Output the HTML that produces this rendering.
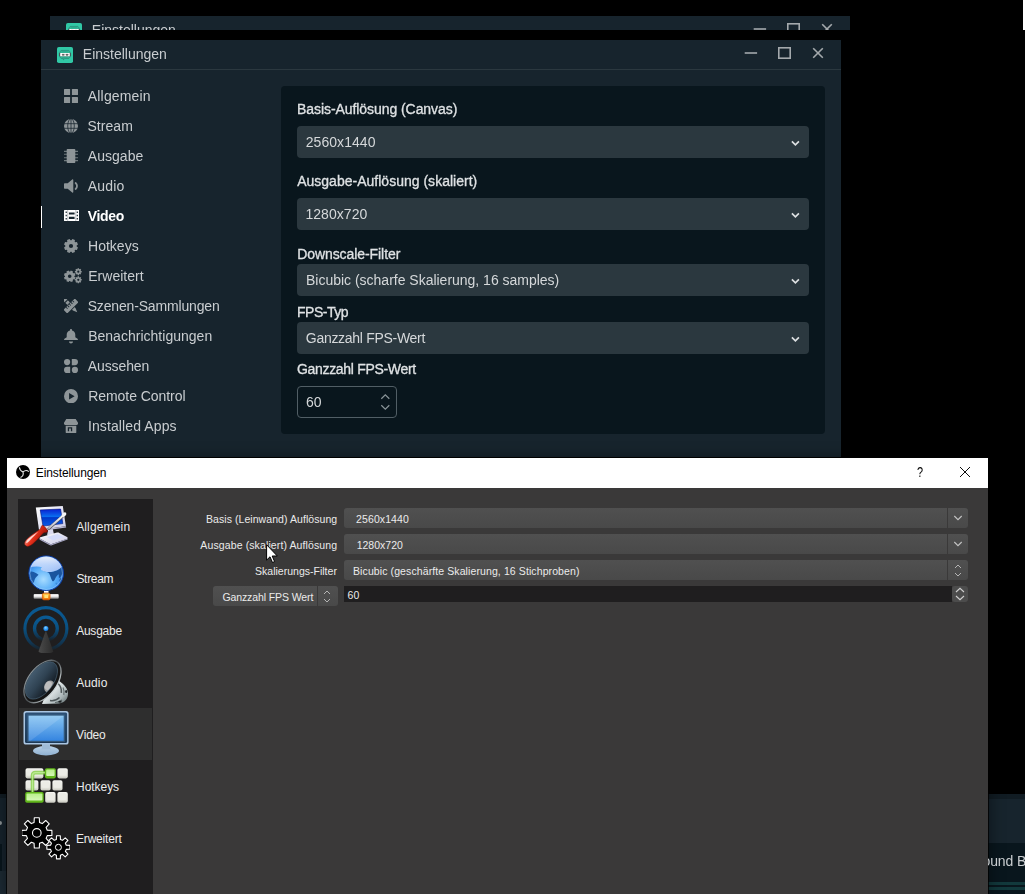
<!DOCTYPE html>
<html lang="de">
<head>
<meta charset="utf-8">
<title>Einstellungen</title>
<style>
html,body{margin:0;padding:0;}
body{width:1025px;height:894px;background:#000;overflow:hidden;position:relative;font-family:"Liberation Sans",sans-serif;}
.a{position:absolute;}
.gl{position:absolute;left:0;top:0;width:1025px;height:894px;will-change:transform;}
.tx{position:absolute;white-space:nowrap;line-height:20px;font-family:"Liberation Sans",sans-serif;}
.slwin{position:absolute;width:800px;background:#17242d;overflow:hidden;}
.sltb{position:absolute;left:0;top:0;width:800px;height:29px;border-bottom:1px solid #2b383f;}
.slicon{position:absolute;left:16px;top:7px;width:16px;height:16px;}
.ctl{position:absolute;}
.panel{position:absolute;left:281px;top:86px;width:544px;height:348px;background:#09161d;border-radius:4px;}
.inp{position:absolute;left:297px;width:512px;height:32px;background:#2b383f;border-radius:4px;}
.chev{position:absolute;left:791px;width:9px;height:7px;}
.num{position:absolute;left:297px;top:386px;width:98px;height:30px;border:1px solid #515e65;border-radius:4px;background:#09161d;}
.navic{position:absolute;left:63px;width:16px;height:16px;}
.obs{position:absolute;left:7px;top:458px;width:981px;height:436px;background:#3a3939;box-shadow:0 0 0 1px rgba(0,0,0,.75),0 2px 14px 2px rgba(0,0,0,.42);}
.obstb{position:absolute;left:0;top:0;width:981px;height:30px;background:#fff;}
.olist{position:absolute;left:11px;top:41px;width:135px;height:400px;background:#1f1e1f;}
.osel{position:absolute;left:12px;top:250px;width:133px;height:52px;background:#2e2e2e;}
.ocombo{position:absolute;left:337px;width:624px;height:20px;background:linear-gradient(#505050,#494949);border-radius:3px;}
.ocombo i{position:absolute;right:20px;top:0;width:1px;height:20px;background:#3a3939;}
.oico{position:absolute;left:15px;width:48px;height:48px;}
</style>
</head>
<body>
<!-- white sliver top right -->
<div class="a" style="left:1023px;top:0;width:2px;height:30px;background:#fff"></div>

<!-- background app bits (bottom) -->
<div class="a" style="left:0;top:794px;width:8px;height:100px;background:#17242d"></div>
<div class="a" style="left:0;top:794px;width:8px;height:4px;background:#111c23"></div>
<div class="a" style="left:0;top:844px;width:2px;height:27px;background:#09161d"></div>
<div class="a" style="left:0;top:871px;width:8px;height:23px;background:#1d2b35"></div>
<div class="a" style="left:0;top:821px;width:2px;height:4px;background:#8e9598;border-radius:0 2px 2px 0"></div>
<div class="a" style="left:988px;top:794px;width:37px;height:100px;background:#17242d"></div>
<div class="a" style="left:988px;top:794px;width:37px;height:5px;background:#111c23"></div>
<div class="a" style="left:988px;top:843px;width:37px;height:51px;background:#09161d"></div>
<div class="a" style="left:988px;top:882px;width:37px;height:3px;background:#12393c"></div>
<div class="a" style="left:988px;top:887px;width:37px;height:3px;background:#12393c"></div>

<!-- partially visible Streamlabs window (strip) -->
<div class="slwin" style="left:50px;top:16px;height:14px;">
<div class="sltb"></div>
<svg class="slicon" viewBox="0 0 16 16"><rect width="16" height="16" rx="1.800" fill="#31c8a6"/><path d="M4.600 3.400h6.800c.5 0 .9.300 1.100.7l1.100 2v3l-1.100 1.700c-.2.400-.6.700-1.100.7H7.800l-1.500 1.400v-1.400H4.600c-.5 0-.9-.3-1.100-.7L2.400 9.100v-3l1.100-2c.2-.4.600-.7 1.100-.7z" fill="#2db595" stroke="#2b6f66" stroke-width=".5"/><path d="M5.200 4.400h5.600M5.200 10.400h5.400" stroke="#2a9a80" stroke-width=".5"/><rect x="2.200" y="5.900" width="11.600" height="3.300" rx=".6" fill="#4b4852"/><rect x="3.200" y="5.900" width="9.600" height="3.300" rx=".5" fill="#fff"/><path d="M5 7h2.200v1.500H5.300zM9 7h2.300l-.3 1.500H9zM7.200 7.300h1.800" fill="#666" stroke="#666" stroke-width=".3"/></svg>
<svg class="ctl" style="left:703px;top:6px;width:90px;height:14px" viewBox="0 0 90 14"><g fill="none" stroke="#a4a9ac" stroke-width="1.600"><path d="M0.700 7h12.400"/><rect x="34.800" y="1.800" width="11.400" height="10.400"/><path d="M69.200 2.200l9.600 9.600M78.800 2.200l-9.600 9.600"/></g></svg>

</div>

<!-- main Streamlabs settings window -->
<div class="slwin" style="left:41px;top:40px;height:417px;">
<div class="sltb"></div>
<svg class="slicon" viewBox="0 0 16 16"><rect width="16" height="16" rx="1.800" fill="#31c8a6"/><path d="M4.600 3.400h6.800c.5 0 .9.300 1.100.7l1.100 2v3l-1.100 1.700c-.2.400-.6.700-1.100.7H7.800l-1.500 1.400v-1.400H4.600c-.5 0-.9-.3-1.100-.7L2.400 9.100v-3l1.100-2c.2-.4.600-.7 1.100-.7z" fill="#2db595" stroke="#2b6f66" stroke-width=".5"/><path d="M5.200 4.400h5.600M5.200 10.400h5.400" stroke="#2a9a80" stroke-width=".5"/><rect x="2.200" y="5.900" width="11.600" height="3.300" rx=".6" fill="#4b4852"/><rect x="3.200" y="5.900" width="9.600" height="3.300" rx=".5" fill="#fff"/><path d="M5 7h2.200v1.500H5.300zM9 7h2.300l-.3 1.500H9zM7.200 7.300h1.800" fill="#666" stroke="#666" stroke-width=".3"/></svg>
<svg class="ctl" style="left:703px;top:6px;width:90px;height:14px" viewBox="0 0 90 14"><g fill="none" stroke="#a4a9ac" stroke-width="1.600"><path d="M0.700 7h12.400"/><rect x="34.800" y="1.800" width="11.400" height="10.400"/><path d="M69.200 2.200l9.600 9.600M78.800 2.200l-9.600 9.600"/></g></svg>

</div>
<div class="a" style="left:41px;top:206px;width:1px;height:22px;background:#fff"></div>
<div class="panel"></div>
<div class="inp" style="top:126px"></div>
<div class="inp" style="top:198px"></div>
<div class="inp" style="top:264px"></div>
<div class="inp" style="top:322px"></div>
<svg class="chev" style="top:140px" viewBox="0 0 9 7"><path d="M.9 1.400L4.400 4.900 7.900 1.400" fill="none" stroke="#dde0e2" stroke-width="1.700"/></svg>
<svg class="chev" style="top:212px" viewBox="0 0 9 7"><path d="M.9 1.400L4.400 4.900 7.900 1.400" fill="none" stroke="#dde0e2" stroke-width="1.700"/></svg>
<svg class="chev" style="top:278px" viewBox="0 0 9 7"><path d="M.9 1.400L4.400 4.900 7.900 1.400" fill="none" stroke="#dde0e2" stroke-width="1.700"/></svg>
<svg class="chev" style="top:336px" viewBox="0 0 9 7"><path d="M.9 1.400L4.400 4.900 7.900 1.400" fill="none" stroke="#dde0e2" stroke-width="1.700"/></svg>

<div class="num"></div>
<svg class="a" style="left:380px;top:393px;width:10px;height:18px" viewBox="0 0 10 18"><path d="M1.300 5.700L5.300 1.800 9.300 5.700M1.300 12.300l4 3.900 4-3.900" fill="none" stroke="#8a9599" stroke-width="1.200"/></svg>
<svg class="a" style="left:64px;top:89px;width:14px;height:14px" viewBox="0 0 14 14"><g fill="#8e9598"><rect x="0" y="0" width="6.100" height="6.100" rx=".5"/><rect x="0" y="7.9" width="6.100" height="6.100" rx=".5"/><rect x="7.9" y="0" width="6.100" height="6.100" rx=".5"/><rect x="7.9" y="7.9" width="6.100" height="6.100" rx=".5"/></g></svg>
<svg class="a" style="left:64px;top:118.5px;width:14px;height:14px" viewBox="0 0 14 14"><circle cx="7" cy="7" r="7" fill="#8e9598"/><g fill="none" stroke="#17242d" stroke-width=".75"><ellipse cx="7" cy="7" rx="3.300" ry="7.300"/><path d="M7 0v14M0 4.700h14M0 9.300h14"/></g></svg>
<svg class="a" style="left:64px;top:149px;width:14px;height:14px" viewBox="0 0 14 14"><path fill="#8e9598" d="M3.700 0h6.600c.6 0 1 .4 1 1v12c0 .6-.4 1-1 1H3.700c-.6 0-1-.4-1-1V1c0-.6.4-1 1-1z"/><path fill="#8e9598" opacity=".75" d="M0 1.8h3v1.100H0zM11 1.8h3v1.100h-3zM0 4.7h3v1.100H0zM11 4.7h3v1.100h-3zM0 8.2h3v1.100H0zM11 8.2h3v1.100h-3zM0 11.1h3v1.100H0zM11 11.1h3v1.100h-3z"/></svg>
<svg class="a" style="left:64px;top:178.5px;width:14px;height:14px" viewBox="0 0 14 14"><path fill="#8e9598" d="M.7 4.200h3L8.200.4c.4-.4 1.100-.1 1.100.5v12.200c0 .6-.7.900-1.100.5L3.700 9.800H.7c-.4 0-.7-.3-.7-.7V4.900c0-.4.300-.7.700-.7z"/><path fill="none" stroke="#8e9598" stroke-width="1.800" stroke-linecap="round" d="M11.600 4a3.900 3.900 0 0 1 0 6"/></svg>
<svg class="a" style="left:63.5px;top:210px;width:15.5px;height:11.2px" viewBox="0 0 15.5 11.2"><path fill="#ffffff" fill-rule="evenodd" d="M.6 0h14.300c.3 0 .6.300.6.600v10c0 .3-.3.600-.6.600H.6c-.3 0-.6-.3-.6-.6V.6C0 .3.300 0 .6 0zM1.600 1.5h1.200v1.400H1.600zM12.700 1.5h1.200v1.400h-1.200zM1.600 4.8h1.200v1.400H1.600zM12.700 4.8h1.200v1.400h-1.200zM1.600 8.1h1.200v1.400H1.600zM12.700 8.1h1.200v1.400h-1.200zM4.900 2.400h5.700v2.100H4.900zM4.900 6.800h5.700v2.100H4.900z"/><path d="M3.700 0v11.200M11.800 0v11.200" stroke="#17242d" stroke-width=".5" opacity=".55"/></svg>
<svg class="a" style="left:64px;top:239px;width:14px;height:14px" viewBox="0 0 14 14"><path fill="#8e9598" fill-rule="evenodd" d="M12.68 7.50L13.96 8.40L12.91 10.94L11.37 10.66L10.66 11.37L10.94 12.91L8.40 13.96L7.50 12.68L6.50 12.68L5.60 13.96L3.06 12.91L3.34 11.37L2.63 10.66L1.09 10.94L0.04 8.40L1.32 7.50L1.32 6.50L0.04 5.60L1.09 3.06L2.63 3.34L3.34 2.63L3.06 1.09L5.60 0.04L6.50 1.32L7.50 1.32L8.40 0.04L10.94 1.09L10.66 2.63L11.37 3.34L12.91 3.06L13.96 5.60L12.68 6.50zM4.90 7.00a2.1 2.1 0 1 0 4.2 0a2.1 2.1 0 1 0 -4.2 0z"/></svg>
<svg class="a" style="left:64px;top:268px;width:18px;height:15.5px" viewBox="0 0 18 15.5"><path fill="#8e9598" fill-rule="evenodd" d="M10.38 8.71L11.48 9.46L10.61 11.57L9.30 11.32L8.72 11.90L8.97 13.21L6.86 14.08L6.11 12.98L5.29 12.98L4.54 14.08L2.43 13.21L2.68 11.90L2.10 11.32L0.79 11.57L-0.08 9.46L1.02 8.71L1.02 7.89L-0.08 7.14L0.79 5.03L2.10 5.28L2.68 4.70L2.43 3.39L4.54 2.52L5.29 3.62L6.11 3.62L6.86 2.52L8.97 3.39L8.72 4.70L9.30 5.28L10.61 5.03L11.48 7.14L10.38 7.89zM3.90 8.30a1.8 1.8 0 1 0 3.6 0a1.8 1.8 0 1 0 -3.6 0z"/><path fill="#8e9598" fill-rule="evenodd" d="M16.88 2.89L17.73 3.02L17.73 4.38L16.88 4.51L16.69 4.95L17.21 5.65L16.25 6.61L15.55 6.09L15.11 6.28L14.98 7.13L13.62 7.13L13.49 6.28L13.05 6.09L12.35 6.61L11.39 5.65L11.91 4.95L11.72 4.51L10.87 4.38L10.87 3.02L11.72 2.89L11.91 2.45L11.39 1.75L12.35 0.79L13.05 1.31L13.49 1.12L13.62 0.27L14.98 0.27L15.11 1.12L15.55 1.31L16.25 0.79L17.21 1.75L16.69 2.45zM13.20 3.70a1.1 1.1 0 1 0 2.2 0a1.1 1.1 0 1 0 -2.2 0zM16.88 10.99L17.73 11.12L17.73 12.48L16.88 12.61L16.69 13.05L17.21 13.75L16.25 14.71L15.55 14.19L15.11 14.38L14.98 15.23L13.62 15.23L13.49 14.38L13.05 14.19L12.35 14.71L11.39 13.75L11.91 13.05L11.72 12.61L10.87 12.48L10.87 11.12L11.72 10.99L11.91 10.55L11.39 9.85L12.35 8.89L13.05 9.41L13.49 9.22L13.62 8.37L14.98 8.37L15.11 9.22L15.55 9.41L16.25 8.89L17.21 9.85L16.69 10.55zM13.20 11.80a1.1 1.1 0 1 0 2.2 0a1.1 1.1 0 1 0 -2.2 0z"/></svg>
<svg class="a" style="left:64px;top:298.5px;width:14px;height:14px" viewBox="0 0 14 14"><g transform="rotate(45 7 7)"><path fill="#8e9598" d="M-2.100 5.200h13.600l4.400 1.800-4.400 1.800H-2.100c-.4 0-.7-.3-.7-.7V5.900c0-.4.300-.7.700-.7z"/><rect x="-.2" y="5" width="1" height="4" fill="#17242d"/></g><g transform="rotate(-45 7 7)"><rect x="-1.600" y="3.600" width="17.200" height="6.800" rx=".8" fill="#17242d"/><rect x="-1" y="4.400" width="16" height="5.200" rx=".6" fill="#8e9598"/><rect x="2.2" y="4.400" width=".9" height="2.100" fill="#17242d"/><rect x="4.5" y="4.400" width=".9" height="2.100" fill="#17242d"/><rect x="6.8" y="4.400" width=".9" height="2.100" fill="#17242d"/><rect x="9.1" y="4.400" width=".9" height="2.100" fill="#17242d"/><rect x="11.4" y="4.400" width=".9" height="2.100" fill="#17242d"/></g></svg>
<svg class="a" style="left:64px;top:328.5px;width:14px;height:15px" viewBox="0 0 14 15"><path fill="#8e9598" d="M7 0c.6 0 1 .4 1 1v.4c2 .5 3.300 2.200 3.300 4.300v2.500l1.900 1.300c.5.300.800.700.800 1.100 0 .3-.2.500-.5.500H.5c-.3 0-.5-.2-.5-.5 0-.4.300-.8.800-1.100l1.900-1.300V5.700c0-2.100 1.300-3.800 3.300-4.300V1c0-.6.400-1 1-1zM5 12.500h4c0 1.100-.9 2-2 2s-2-.9-2-2z"/></svg>
<svg class="a" style="left:64px;top:359px;width:14px;height:14px" viewBox="0 0 14 14"><circle cx="3.100" cy="3.100" r="3.100" fill="#8e9598"/><circle cx="10.900" cy="10.900" r="3.100" fill="#8e9598"/><path fill="#8e9598" d="M7.800 0h3.100a3.100 3.100 0 0 1 0 6.200H7.800zM6.200 7.800H3.100a3.100 3.100 0 0 0 0 6.200h3.100z"/></svg>
<svg class="a" style="left:64px;top:388.5px;width:14px;height:14.4px" viewBox="0 0 14 14.4"><path fill="#8e9598" fill-rule="evenodd" d="M0 7.200a7 7.200 0 1 0 14 0a7 7.200 0 1 0 -14 0zM5.100 3.900L10.600 7.200 5.100 10.500z"/></svg>
<svg class="a" style="left:64px;top:419px;width:14px;height:14px" viewBox="0 0 14 14"><path fill="#8e9598" d="M2.300 0h9.400L14 3.700v1c0 .7-.6 1.200-1.300 1.200H1.300C.6 5.900 0 5.400 0 4.700v-1z"/><path fill="#8e9598" fill-rule="evenodd" d="M1.700 6.800h10.600V13.600c0 .2-.2.400-.4.400H2.100c-.2 0-.4-.2-.4-.4zM3.800 8.300v3.900h4.400V8.300zM5.100 9.600h1.800v2.600H5.100z"/></svg>


<!-- OBS settings window -->
<div class="obs">
<div class="obstb"></div>
<div class="olist"></div>
<div class="osel"></div>
<div class="ocombo" style="top:50px"><i></i></div>
<div class="ocombo" style="top:76px"><i></i></div>
<div class="ocombo" style="top:102px"><i></i></div>
<div class="ocombo" style="left:206px;top:128px;width:125px"><i></i></div>
<div class="a" style="left:337px;top:128px;width:608px;height:16px;background:#1f1e1f"></div>
<div class="a" style="left:945px;top:128px;width:16px;height:16px;background:#4c4c4c;border-radius:3px"></div>
<svg class="a" style="left:9px;top:7px;width:14px;height:14px" viewBox="0 0 14 14"><circle cx="7" cy="7" r="7" fill="#000"/><path d="M7 7C5.500 6.300 3.600 5.200 3.400 2.200M7 7C8.300 5.800 10.500 4.600 12.800 6.600M7 7C7.600 9 7.200 11.200 4.500 12.600" fill="none" stroke="#fff" stroke-width="1.100" opacity=".92"/></svg>
<svg class="a" style="left:952px;top:8px;width:12px;height:12px" viewBox="0 0 12 12"><path d="M1 1l10 10M11 1L1 11" stroke="#000" stroke-width=".95"/></svg>
<svg class="a" style="left:946px;top:57px;width:10px;height:6px" viewBox="0 0 10 6"><path d="M1.300 1l3.700 3.700L8.700 1" fill="none" stroke="#c4c4c4" stroke-width="1.100"/></svg>
<svg class="a" style="left:946px;top:83px;width:10px;height:6px" viewBox="0 0 10 6"><path d="M1.300 1l3.700 3.700L8.700 1" fill="none" stroke="#c4c4c4" stroke-width="1.100"/></svg>
<svg class="a" style="left:947px;top:106px;width:8px;height:13px" viewBox="0 0 8 13"><path d="M1 4l3-3 3 3M1 9l3 3 3-3" fill="none" stroke="#b4b4b4" stroke-width="1"/></svg>
<svg class="a" style="left:316px;top:132px;width:8px;height:13px" viewBox="0 0 8 13"><path d="M1 4l3-3 3 3M1 9l3 3 3-3" fill="none" stroke="#b4b4b4" stroke-width="1"/></svg>
<svg class="a" style="left:948px;top:129px;width:10px;height:14px" viewBox="0 0 10 14"><path d="M1 5l4-3.700L9 5M1 9l4 3.700L9 9" fill="none" stroke="#d0d0d0" stroke-width="1.100"/></svg>
<svg class="oico" style="top:43px" viewBox="0 0 48 48"><defs><linearGradient id="g1a" x1="0" y1="0" x2="0" y2="1"><stop offset="0" stop-color="#0a1fd0"/><stop offset=".45" stop-color="#0a6ff0"/><stop offset=".5" stop-color="#0037c8"/><stop offset="1" stop-color="#0a5be6"/></linearGradient>
<linearGradient id="g1b" x1="0" y1="0" x2="1" y2="1"><stop offset="0" stop-color="#ffffff"/><stop offset="1" stop-color="#c9c9e6"/></linearGradient>
<linearGradient id="g1c" x1="0" y1="0" x2="1" y2="1"><stop offset="0" stop-color="#ffa596"/><stop offset=".4" stop-color="#e8321c"/><stop offset="1" stop-color="#9c1408"/></linearGradient>
<linearGradient id="g1d" x1="0" y1="0" x2="0" y2="1"><stop offset="0" stop-color="#ffffff"/><stop offset="1" stop-color="#b9b9c9"/></linearGradient></defs><path d="M26.5 26.500l4 0 1.500 7-7 1z" fill="#d9d9ee"/>
<path d="M18.300 36.300L35 31.600c.8-.2 1.600-.1 2.300.3l7.700 4.200c1 .6.900 1.600-.2 2L29.800 43c-.8.300-1.700.2-2.400-.2l-9.300-5c-.8-.5-.7-1.200.2-1.500z" fill="url(#g1b)"/>
<path d="M17.600 37.300l9.800 5.500c.7.400 1.600.5 2.400.2l15.900-5.600c.2.600-.1 1.100-.9 1.400L29.800 44.300c-.8.300-1.700.2-2.400-.2l-9.300-5.200c-.6-.4-.8-1-.5-1.600z" fill="#a9a9c6"/>
<path d="M25 36l10.500-2.900 6 3.100-10.500 3.400z" fill="#d3dbfb"/>
<g transform="translate(0 .6)"><path d="M13.800 5.800L40.800 4.500 43.900 24.600 17 28.300z" fill="url(#g1b)"/>
<path d="M17 28.300L43.900 24.600l.3 1.200L17.400 29.700z" fill="#b5b5d2"/>
<path d="M18.200 8.300L38.600 7.500 40.800 22 21 24.500z" fill="url(#g1a)"/>
<path d="M18.200 8.300L38.600 7.500 40.800 22 21 24.500z" fill="none" stroke="#00107a" stroke-width=".6"/></g>
<path d="M27 27.300L42.600 13.500" stroke="#555" stroke-width="2.900" stroke-linecap="round"/>
<path d="M27 27L42.600 13.300" stroke="url(#g1d)" stroke-width="2" stroke-linecap="round"/>
<ellipse cx="42" cy="13.600" rx="2.700" ry="1.700" transform="rotate(-40 42 13.600)" fill="#f6f6f6"/>
<g transform="translate(-.3 -.6) rotate(-41 14 36) translate(14 36) scale(.88) translate(-14 -36)"><path d="M-1.500 36c0-2.800 3-4.300 7.500-4.300 6 0 12.500 1.200 17.500 1.500 1.500-.8 2.800-1.900 4-1.900 1 0 1.400 2.200 1.400 4.700s-.4 4.700-1.400 4.700c-1.200 0-2.500-1.100-4-1.900-5 .3-11.500 1.500-17.500 1.500-4.500 0-7.500-1.500-7.500-4.300z" fill="url(#g1c)" stroke="#7a0c04" stroke-width=".5"/><path d="M1 34.500c1-1.300 3-1.800 6-1.800 4 0 9 .6 13 1-4 .4-9 .8-13 1.200-2.500.2-5 .6-6-.4z" fill="#ffe4de" opacity=".95"/></g></svg>
<svg class="oico" style="top:95px" viewBox="0 0 48 48"><defs><radialGradient id="g2a" cx=".42" cy=".68" r=".75"><stop offset="0" stop-color="#a8dcff"/><stop offset=".45" stop-color="#58aef8"/><stop offset=".8" stop-color="#2c7be0"/><stop offset="1" stop-color="#0f47b4"/></radialGradient>
<linearGradient id="g2b" x1="0" y1="0" x2="0" y2="1"><stop offset="0" stop-color="#ffffff" stop-opacity=".95"/><stop offset=".6" stop-color="#dfe6ff" stop-opacity=".75"/><stop offset="1" stop-color="#c6cff8" stop-opacity=".7"/></linearGradient>
<linearGradient id="g2c" x1="0" y1="0" x2="0" y2="1"><stop offset="0" stop-color="#dcdcdc"/><stop offset=".4" stop-color="#ffffff"/><stop offset="1" stop-color="#7c7c7c"/></linearGradient>
<linearGradient id="g2d" x1="0" y1="0" x2="0" y2="1"><stop offset="0" stop-color="#ffd24a"/><stop offset="1" stop-color="#f06a00"/></linearGradient>
<clipPath id="c2"><circle cx="24.200" cy="20.200" r="16.800"/></clipPath></defs><rect x="22" y="36.500" width="4.500" height="5" fill="url(#g2c)"/>
<rect x="11.700" y="41.100" width="25" height="4.700" rx=".8" fill="url(#g2c)"/>
<rect x="20.400" y="40.200" width="7.600" height="6.600" rx="1.500" fill="url(#g2d)" stroke="#e05a00" stroke-width=".8"/>
<rect x="22.300" y="41.800" width="3.800" height="3.200" fill="#ffe27a"/>
<circle cx="24.200" cy="20.200" r="17.300" fill="url(#g2a)" stroke="#0d3fa8" stroke-width="1"/>
<g clip-path="url(#c2)"><path d="M8.500 18.500c2.500-.3 5.500 1.200 8 3.200-1.200 1.300-2.800 2.500-3.600 4.300-.7 1.600-1 4.200-2 5-1.300-1-1.300-3.500-2.200-5.300-.9-1.700-1.500-4-.2-7.200z" fill="#1c5aa6"/>
<path d="M19.500 17.200c2.500 1.600 6 2 9.500 1.700 4-.4 8.500-2 11.500-5.600.8 1.800 1.600 4.500 1.400 6.500-1 1-2 1.600-2.600 3-.5 1.200-1.400 2.300-2.300 2.300-.4-1.600.3-3-.5-3.800-1.500 1-2.800 3.200-3.800 5.500-.6 1.300-1.800 2.200-2.500 1-1.200-2.300-1.800-5-3-7.300-1.300-2.300-6-1.800-7.700-3.300z" fill="#1a549e"/>
<path d="M38.800 24.500c.8.700 1.500 1.800 1.100 3-.4 1.100-1.300 2-2.100 1.600-.7-.7-.4-2.100.1-3zM34 29.500c.5.500.6 1.300.2 2-.3-.2-.6-1.200-.2-2z" fill="#1f60ac"/>
<path d="M4.500 16C5 6.500 15 1.500 25 2.500c7.500.8 13.500 5 15.500 10.800-3 3.600-7.500 5.200-11.500 5.600-3.500.3-7-.1-9.500-1.700-1.300-1-.6-2.400.8-3C15 13 9 13.500 4.500 16z" fill="url(#g2b)"/></g>
<circle cx="24.200" cy="20.200" r="16.300" fill="none" stroke="#bfe0ff" stroke-width=".6" opacity=".6"/></svg>
<svg class="oico" style="top:147px" viewBox="0 0 48 48"><defs><linearGradient id="g3a" x1="0" y1="0" x2="0" y2="1"><stop offset="0" stop-color="#0a5a94"/><stop offset=".5" stop-color="#0a5080"/><stop offset=".85" stop-color="#0d3a5c" stop-opacity=".8"/><stop offset="1" stop-color="#0d3048" stop-opacity=".35"/></linearGradient>
<linearGradient id="g3b" x1="0" y1="0" x2="1" y2="0"><stop offset="0" stop-color="#4a4a4a"/><stop offset="1" stop-color="#2b2b2b"/></linearGradient>
<radialGradient id="g3c" cx=".45" cy=".35" r=".7"><stop offset="0" stop-color="#8fd2ff"/><stop offset=".5" stop-color="#2f9bf5"/><stop offset="1" stop-color="#0a6fd8"/></radialGradient></defs><circle cx="23.900" cy="23.600" r="21" fill="none" stroke="url(#g3a)" stroke-width="3.100"/>
<circle cx="23.900" cy="23.600" r="11.400" fill="none" stroke="url(#g3a)" stroke-width="3.300"/>
<path d="M23.900 25.200L31.300 46.500c-2 2.600-12.800 2.600-14.800 0z" fill="url(#g3b)"/>
<circle cx="23.900" cy="23.500" r="2.500" fill="url(#g3c)"/></svg>
<svg class="oico" style="top:199px" viewBox="0 0 48 48"><defs><linearGradient id="g4a" x1="0" y1="0" x2="0" y2="1"><stop offset="0" stop-color="#445b6e"/><stop offset=".5" stop-color="#2f4252"/><stop offset="1" stop-color="#141c24"/></linearGradient>
<linearGradient id="g4b" x1="0" y1="0" x2="1" y2="1"><stop offset="0" stop-color="#8d999c"/><stop offset=".45" stop-color="#e4eaeb"/><stop offset=".75" stop-color="#aab5b7"/><stop offset="1" stop-color="#4e5a5c"/></linearGradient>
<linearGradient id="g4c" x1="0" y1="0" x2="0" y2="1"><stop offset="0" stop-color="#8a9398"/><stop offset=".5" stop-color="#4a4f52"/><stop offset="1" stop-color="#c8d0d2"/></linearGradient>
<clipPath id="c4"><ellipse cx="19.400" cy="23.400" rx="21.600" ry="11.900" transform="rotate(-53 19.400 23.400)"/></clipPath></defs><path d="M31 19l10 8c4 3.500 6 8.500 4.500 13-1.200 3.500-4.500 6-9 6.500L20 47z" fill="url(#g4b)"/>
<path d="M35.500 26c3 2.800 4.300 6.300 3.800 9.800M28 43.500c3.500.6 7-.6 9.500-3" stroke="#2a3234" stroke-width="1.600" fill="none" opacity=".75"/><path d="M41 30.500c1.200 2.500 1.400 5 .8 7.500M33 45.500c2.500 0 5-.8 7-2.500" stroke="#3a4446" stroke-width="1.100" fill="none" opacity=".7"/>
<ellipse cx="44.200" cy="34.500" rx="1.100" ry="1.500" fill="#1d2224"/><ellipse cx="38" cy="44.800" rx="1.700" ry="1" fill="#1d2224"/>
<ellipse cx="20.500" cy="24.500" rx="24.300" ry="14.200" transform="rotate(-53 20.500 24.500)" fill="#151515" stroke="url(#g4c)" stroke-width="1.300"/>
<ellipse cx="19.400" cy="23.400" rx="21.600" ry="11.900" transform="rotate(-53 19.400 23.400)" fill="url(#g4a)"/>
<g clip-path="url(#c4)"><ellipse cx="27.300" cy="29.500" rx="5" ry="6.300" transform="rotate(25 27.300 29.500)" fill="#9c9c9c"/><ellipse cx="26.300" cy="28.700" rx="3.300" ry="4.500" transform="rotate(25 26.300 28.700)" fill="#bdbdbd"/></g>
<ellipse cx="19.400" cy="23.400" rx="21.600" ry="11.900" transform="rotate(-53 19.400 23.400)" fill="none" stroke="#4f6a7e" stroke-width=".7" opacity=".8"/></svg>
<svg class="oico" style="top:251px" viewBox="0 0 48 48"><defs><linearGradient id="g5a" x1="0" y1="0" x2="0" y2="1"><stop offset="0" stop-color="#86c4f2"/><stop offset="1" stop-color="#3585e0"/></linearGradient>
<linearGradient id="g5b" x1="0" y1="0" x2="0" y2="1"><stop offset="0" stop-color="#2b4f74"/><stop offset="1" stop-color="#1d3955"/></linearGradient>
<linearGradient id="g5c" x1="0" y1="0" x2="0" y2="1"><stop offset="0" stop-color="#b9d0e6"/><stop offset="1" stop-color="#90b2d2"/></linearGradient></defs><ellipse cx="24" cy="41.800" rx="13" ry="4.700" fill="url(#g5c)"/>
<path d="M20 35h8v3.600c0 1 .8 1.500 1.800 1.800H18.200c1-.3 1.800-.8 1.800-1.800z" fill="#9fbbd6"/>
<rect x="1.500" y="2.100" width="45.100" height="33.400" rx="2.600" fill="#a9c5e2"/>
<rect x="3" y="3.600" width="42.100" height="30.400" rx="1.500" fill="url(#g5b)"/>
<rect x="5.300" y="5.500" width="37.600" height="27.400" fill="#3f668c" opacity=".7"/>
<rect x="6.600" y="6.700" width="35.100" height="25.100" fill="url(#g5a)"/>
<path d="M6.600 6.700h35.100L8.500 31.800H6.600z" fill="#ffffff" opacity=".13"/></svg>
<svg class="oico" style="top:303px" viewBox="0 0 48 48"><defs><linearGradient id="g6a" x1="0" y1="0" x2="0" y2="1"><stop offset="0" stop-color="#f6f6f2"/><stop offset=".75" stop-color="#e4e4dc"/><stop offset="1" stop-color="#c4c4bc"/></linearGradient>
<linearGradient id="g6b" x1="0" y1="0" x2="0" y2="1"><stop offset="0" stop-color="#b9f08a"/><stop offset="1" stop-color="#d6f7b8"/></linearGradient>
<filter id="f6" x="-.2" y="-.2" width="1.400" height="1.400"><feGaussianBlur stdDeviation=".45"/></filter></defs><g filter="url(#f6)"><rect x="3.5" y="7.3" width="17.9" height="10.1" rx="1.800" fill="url(#g6a)"/><rect x="5.1" y="8.5" width="14.7" height="6.1" rx="1" fill="#ecece6"/><rect x="35.4" y="7.3" width="10.4" height="10.1" rx="1.800" fill="url(#g6a)"/><rect x="37.0" y="8.5" width="7.2" height="6.1" rx="1" fill="#ecece6"/><rect x="3.5" y="19.2" width="12.9" height="10.4" rx="1.800" fill="url(#g6a)"/><rect x="5.1" y="20.4" width="9.7" height="6.4" rx="1" fill="#ecece6"/><rect x="18.5" y="19.2" width="10.1" height="10.4" rx="1.800" fill="url(#g6a)"/><rect x="20.1" y="20.4" width="6.9" height="6.4" rx="1" fill="#ecece6"/><rect x="30.4" y="19.2" width="10.1" height="10.4" rx="1.800" fill="url(#g6a)"/><rect x="32.0" y="20.4" width="6.9" height="6.4" rx="1" fill="#ecece6"/><rect x="23.2" y="31.1" width="10.4" height="10.7" rx="1.800" fill="url(#g6a)"/><rect x="24.8" y="32.3" width="7.2" height="6.7" rx="1" fill="#ecece6"/><rect x="35.4" y="31.1" width="10.4" height="10.7" rx="1.800" fill="url(#g6a)"/><rect x="37.0" y="32.3" width="7.2" height="6.7" rx="1" fill="#ecece6"/>
<path d="M23.500 11.600H13.500c-2 0-3 1-3 3V32" fill="none" stroke="#7ccc3a" stroke-width="3.600" opacity=".75"/>
<path d="M23.500 11.600H13.500c-2 0-3 1-3 3V32" fill="none" stroke="#c4f09c" stroke-width="1.200" opacity=".8"/>
<rect x="22.9" y="7.3" width="11.0" height="10.1" rx="1.800" fill="#62b81c"/><rect x="24.2" y="8.6" width="8.4" height="6.5" rx="1" fill="url(#g6b)"/><rect x="3.2" y="31.1" width="18.5" height="10.7" rx="1.800" fill="#62b81c"/><rect x="4.5" y="32.4" width="15.9" height="7.1" rx="1" fill="url(#g6b)"/></g></svg>
<svg class="oico" style="top:355px" viewBox="0 0 48 48"><path d="M25.25 17.17L29.90 17.41L29.90 22.39L25.25 22.63L24.12 25.36L27.23 28.82L23.72 32.33L20.26 29.22L17.53 30.35L17.29 35.00L12.31 35.00L12.07 30.35L9.34 29.22L5.88 32.33L2.37 28.82L5.48 25.36L4.35 22.63L-0.30 22.39L-0.30 17.41L4.35 17.17L5.48 14.44L2.37 10.98L5.88 7.47L9.34 10.58L12.07 9.45L12.31 4.80L17.29 4.80L17.53 9.45L20.26 10.58L23.72 7.47L27.23 10.98L24.12 14.44z" fill="#000" stroke="#fff" stroke-width="1.100" stroke-linejoin="round"/>
<circle cx="14.800" cy="19.900" r="4.300" fill="#000" stroke="#fff" stroke-width="1.100"/>
<path d="M44.24 32.25L47.94 32.40L47.94 36.20L44.24 36.35L43.39 38.40L45.91 41.12L43.22 43.81L40.50 41.29L38.45 42.14L38.30 45.84L34.50 45.84L34.35 42.14L32.30 41.29L29.58 43.81L26.89 41.12L29.41 38.40L28.56 36.35L24.86 36.20L24.86 32.40L28.56 32.25L29.41 30.20L26.89 27.48L29.58 24.79L32.30 27.31L34.35 26.46L34.50 22.76L38.30 22.76L38.45 26.46L40.50 27.31L43.22 24.79L45.91 27.48L43.39 30.20z" fill="#000" stroke="#fff" stroke-width="1.100" stroke-linejoin="round"/>
<circle cx="36.400" cy="34.300" r="3" fill="#000" stroke="#fff" stroke-width="1"/></svg>

</div>

<span class="tx" style="left:35.83px;top:462.84px;font-size:12px;color:#000000;letter-spacing:-0.116px;">Einstellungen</span>
<span class="tx" style="left:205.94px;top:509.36px;font-size:10.5px;color:#ebebeb;letter-spacing:0.066px;">Basis (Leinwand) Auflösung</span>
<span class="tx" style="left:200.36px;top:535.36px;font-size:10.5px;color:#ebebeb;letter-spacing:0.114px;">Ausgabe (skaliert) Auflösung</span>
<span class="tx" style="left:255.07px;top:561.36px;font-size:10.5px;color:#ebebeb;letter-spacing:0.008px;">Skalierungs-Filter</span>
<span class="tx" style="left:222.44px;top:587.36px;font-size:10.5px;color:#ebebeb;letter-spacing:-0.107px;">Ganzzahl FPS Wert</span>
<span class="tx" style="left:356.11px;top:509.36px;font-size:10.5px;color:#ebebeb;letter-spacing:0.087px;">2560x1440</span>
<span class="tx" style="left:356.66px;top:535.36px;font-size:10.5px;color:#ebebeb;letter-spacing:0.005px;">1280x720</span>
<span class="tx" style="left:353.01px;top:561.36px;font-size:10.5px;color:#ebebeb;letter-spacing:0.101px;">Bicubic (geschärfte Skalierung, 16 Stichproben)</span>
<span class="tx" style="left:347.58px;top:585.36px;font-size:10.5px;color:#ebebeb;">60</span>
<span class="tx" style="left:76.13px;top:516.84px;font-size:12px;color:#ebebeb;letter-spacing:0.156px;">Allgemein</span>
<span class="tx" style="left:76.41px;top:568.84px;font-size:12px;color:#ebebeb;letter-spacing:-0.309px;">Stream</span>
<span class="tx" style="left:76.13px;top:620.84px;font-size:12px;color:#ebebeb;letter-spacing:-0.224px;">Ausgabe</span>
<span class="tx" style="left:76.13px;top:672.84px;font-size:12px;color:#ebebeb;letter-spacing:0.126px;">Audio</span>
<span class="tx" style="left:76.08px;top:724.84px;font-size:12px;color:#ebebeb;letter-spacing:-0.197px;">Video</span>
<span class="tx" style="left:76.04px;top:776.84px;font-size:12px;color:#ebebeb;letter-spacing:-0.050px;">Hotkeys</span>
<span class="tx" style="left:76.04px;top:828.84px;font-size:12px;color:#ebebeb;letter-spacing:-0.193px;">Erweitert</span>
<span class="tx" style="left:916.73px;top:462.15px;font-size:14px;color:#000000;transform:scaleX(.78);transform-origin:0 0;">?</span>
<svg class="a" style="left:265px;top:543px;width:14px;height:21px" viewBox="0 0 14 21"><path d="M1.600 1.700V17.100L5 13.800 7.500 19.500 9.600 18.600 7.200 13H12.300z" fill="#fff" stroke="#000" stroke-width="1" stroke-linejoin="miter"/></svg>

<div class="gl">
<span class="tx" style="left:87.84px;top:86.15px;font-size:14px;color:#c9cdd0;letter-spacing:0.167px;">Allgemein</span>
<span class="tx" style="left:87.44px;top:116.15px;font-size:14px;color:#c9cdd0;letter-spacing:0.051px;">Stream</span>
<span class="tx" style="left:87.84px;top:146.15px;font-size:14px;color:#c9cdd0;letter-spacing:0.027px;">Ausgabe</span>
<span class="tx" style="left:87.84px;top:176.15px;font-size:14px;color:#c9cdd0;letter-spacing:0.186px;">Audio</span>
<span class="tx" style="left:87.87px;top:206.15px;font-size:14px;color:#ffffff;font-weight:700;letter-spacing:-0.372px;">Video</span>
<span class="tx" style="left:88.12px;top:236.15px;font-size:14px;color:#c9cdd0;letter-spacing:-0.008px;">Hotkeys</span>
<span class="tx" style="left:88.16px;top:266.15px;font-size:14px;color:#c9cdd0;letter-spacing:0.040px;">Erweitert</span>
<span class="tx" style="left:87.66px;top:296.15px;font-size:14px;color:#c9cdd0;letter-spacing:-0.162px;">Szenen-Sammlungen</span>
<span class="tx" style="left:88.16px;top:326.15px;font-size:14px;color:#c9cdd0;letter-spacing:0.016px;">Benachrichtigungen</span>
<span class="tx" style="left:87.76px;top:356.15px;font-size:14px;color:#c9cdd0;letter-spacing:-0.099px;">Aussehen</span>
<span class="tx" style="left:88.16px;top:386.15px;font-size:14px;color:#c9cdd0;letter-spacing:-0.050px;">Remote Control</span>
<span class="tx" style="left:87.97px;top:416.15px;font-size:14px;color:#c9cdd0;letter-spacing:0.109px;">Installed Apps</span>
<span class="tx" style="left:82.85px;top:44.15px;font-size:14px;color:#c9cdd0;letter-spacing:-0.007px;">Einstellungen</span>
<div class="a" style="left:50px;top:16px;width:800px;height:14px;overflow:hidden"><span class="tx" style="left:41.85px;top:4.15px;font-size:14px;color:#c9cdd0;letter-spacing:-0.007px;">Einstellungen</span></div>
<span class="tx" style="left:297.02px;top:99.15px;font-size:14px;color:#dfe2e4;letter-spacing:-0.067px;-webkit-text-stroke:.3px #dfe2e4;">Basis-Auflösung (Canvas)</span>
<span class="tx" style="left:305.78px;top:132.15px;font-size:14px;color:#d5d8da;letter-spacing:0.048px;">2560x1440</span>
<span class="tx" style="left:297.14px;top:171.15px;font-size:14px;color:#dfe2e4;letter-spacing:0.013px;-webkit-text-stroke:.3px #dfe2e4;">Ausgabe-Auflösung (skaliert)</span>
<span class="tx" style="left:305.39px;top:204.15px;font-size:14px;color:#d5d8da;letter-spacing:0.063px;">1280x720</span>
<span class="tx" style="left:297.16px;top:244.15px;font-size:14px;color:#dfe2e4;letter-spacing:-0.071px;-webkit-text-stroke:.3px #dfe2e4;">Downscale-Filter</span>
<span class="tx" style="left:306.02px;top:270.15px;font-size:14px;color:#d5d8da;letter-spacing:-0.011px;">Bicubic (scharfe Skalierung, 16 samples)</span>
<span class="tx" style="left:297.02px;top:302.15px;font-size:14px;color:#dfe2e4;letter-spacing:-0.476px;-webkit-text-stroke:.3px #dfe2e4;">FPS-Typ</span>
<span class="tx" style="left:305.81px;top:328.15px;font-size:14px;color:#d5d8da;letter-spacing:-0.291px;">Ganzzahl FPS-Wert</span>
<span class="tx" style="left:296.91px;top:359.15px;font-size:14px;color:#dfe2e4;letter-spacing:-0.307px;-webkit-text-stroke:.3px #dfe2e4;">Ganzzahl FPS-Wert</span>
<span class="tx" style="left:305.89px;top:392.15px;font-size:14px;color:#d5d8da;">60</span>
<div class="a" style="left:988px;top:840px;width:37px;height:40px;overflow:hidden"><span class="tx" style="left:-5.54px;top:11.15px;font-size:14px;color:#c9cdd0;letter-spacing:-0.1px;">ound B</span></div>
</div>
</body>
</html>
